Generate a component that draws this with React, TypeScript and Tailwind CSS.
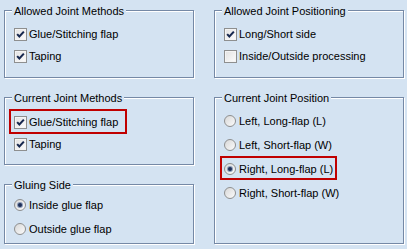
import type { ReactNode } from 'react';

const BG = 'bg-[#d4e3f2]';

function Group({ title, className, children }: { title: string; className: string; children: ReactNode }) {
  return (
    <div className={`relative w-[190px] border border-[#7589a6] shadow-[1px_1px_0_#ffffff,inset_1px_1px_0_#ffffff] ${className}`}>
      <span className={`absolute left-[7px] top-[-6px] px-[2px] leading-[13px] whitespace-nowrap ${BG}`}>{title}</span>
      {children}
    </div>
  );
}

function CheckBox({ checked }: { checked: boolean }) {
  return (
    <span className="flex h-[13px] w-[13px] shrink-0 items-center justify-center border border-[#8e8f8f] bg-gradient-to-br from-[#dcdcdc] to-[#ffffff]">
      <span className="flex h-[11px] w-[11px] items-center justify-center border border-[#f4f4f4] bg-gradient-to-br from-[#e4e4e4] to-[#fafafa]">
        {checked && (
          <svg width="11" height="11" viewBox="0 0 11 11">
            <path d="M1.4 5.1 L4.1 8 L9.6 2" fill="none" stroke="#17284f" strokeWidth="2.5" />
          </svg>
        )}
      </span>
    </span>
  );
}

function Radio({ checked }: { checked: boolean }) {
  return (
    <span className="flex h-[12px] w-[12px] shrink-0 items-center justify-center rounded-full border border-[#8e8f8f] bg-gradient-to-br from-[#d8d8d8] to-[#fbfbfb]">
      {checked && <span className="h-[4px] w-[4px] rounded-full bg-[#1e2f58] shadow-[0_0_0_1px_#8a9bb8]" />}
    </span>
  );
}

function CheckRow({ label, checked, mark }: { label: string; checked: boolean; mark?: boolean }) {
  return (
    <div className="relative flex items-start gap-[2px]">
      <CheckBox checked={checked} />
      <span className="leading-[13px] whitespace-nowrap">{label}</span>
      {mark && <span className="absolute left-[-5px] top-[-7px] h-[25px] w-[118px] border-2 border-[#c00000]" />}
    </div>
  );
}

function RadioRow({ label, checked, mark }: { label: string; checked: boolean; mark?: boolean }) {
  return (
    <div className="relative flex items-start gap-[3px]">
      <Radio checked={checked} />
      <span className="leading-[13px] whitespace-nowrap">{label}</span>
      {mark && <span className="absolute left-[-4px] top-[-7px] h-[24px] w-[117px] border-2 border-[#c00000]" />}
    </div>
  );
}

export default function App() {
  return (
    <div className={`flex h-[249px] w-[407px] gap-[20px] overflow-hidden pl-[4px] pt-[10px] font-['Liberation_Sans',Arial,sans-serif] text-[11px] text-black ${BG}`}>
      {/* Left column */}
      <div className="flex flex-col gap-[19px]">
        <Group title="Allowed Joint Methods" className="h-[68px]">
          <div className="flex flex-col gap-[9px] pl-[9px] pt-[17px]">
            <CheckRow label="Glue/Stitching flap" checked />
            <CheckRow label="Taping" checked />
          </div>
        </Group>
        <Group title="Current Joint Methods" className="h-[68px]">
          <div className="flex flex-col gap-[9px] pl-[9px] pt-[18px]">
            <CheckRow label="Glue/Stitching flap" checked mark />
            <CheckRow label="Taping" checked />
          </div>
        </Group>
        <Group title="Gluing Side" className="h-[60px]">
          <div className="flex flex-col gap-[11px] pl-[9px] pt-[14px]">
            <RadioRow label="Inside glue flap" checked />
            <RadioRow label="Outside glue flap" checked={false} />
          </div>
        </Group>
      </div>

      {/* Right column */}
      <div className="flex flex-col gap-[19px]">
        <Group title="Allowed Joint Positioning" className="h-[68px]">
          <div className="flex flex-col gap-[9px] pl-[9px] pt-[17px]">
            <CheckRow label="Long/Short side" checked />
            <CheckRow label="Inside/Outside processing" checked={false} />
          </div>
        </Group>
        <Group title="Current Joint Position" className="h-[147px]">
          <div className="flex flex-col gap-[11px] pl-[9px] pt-[17px]">
            <RadioRow label="Left, Long-flap (L)" checked={false} />
            <RadioRow label="Left, Short-flap (W)" checked={false} />
            <RadioRow label="Right, Long-flap (L)" checked mark />
            <RadioRow label="Right, Short-flap (W)" checked={false} />
          </div>
        </Group>
      </div>
    </div>
  );
}
